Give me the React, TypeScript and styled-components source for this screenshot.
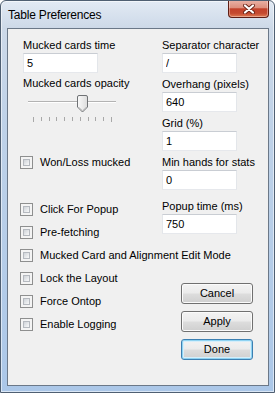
import React from "react";
import styled, { createGlobalStyle, css } from "styled-components";

const GlobalStyle = createGlobalStyle`
  html, body { margin: 0; padding: 0; background: #ffffff; }
  body {
    font-family: "Liberation Sans", Arial, sans-serif;
    font-size: 11px;
    color: #000;
  }
`;

const Window = styled.div`
  box-sizing: border-box;
  width: 275px;
  height: 393px;
  border: 1px solid #4f5f72;
  border-radius: 6px 6px 0 0;
  background: linear-gradient(
    to bottom,
    #e2eaf4 0px,
    #cdd9e8 27px,
    #bfd2e8 120px,
    #abc7e8 100%
  );
  box-shadow: inset 0 0 0 1px rgba(255, 255, 255, 0.55);
  padding: 0 5px 6px 6px;
  display: flex;
  flex-direction: column;
  overflow: hidden;
`;

const TitleBar = styled.div`
  height: 27px;
  flex: none;
  display: flex;
  justify-content: space-between;
  align-items: flex-start;
`;

const Title = styled.div`
  padding: 7px 0 0 1px;
  line-height: 14px;
  font-size: 12px;
  letter-spacing: -0.2px;
  color: #000;
`;

const CloseButton = styled.div`
  box-sizing: border-box;
  width: 41px;
  height: 18px;
  margin-top: -1px;
  border: 1px solid #5e1d14;
  border-top: none;
  border-radius: 0 0 4px 4px;
  background: linear-gradient(
    to bottom,
    #eab3a7 0%,
    #de8f7d 45%,
    #c3412a 52%,
    #c44a30 78%,
    #e07a52 100%
  );
  box-shadow: inset 0 0 0 1px rgba(255, 255, 255, 0.35);
  display: flex;
  align-items: center;
  justify-content: center;
`;

const Client = styled.div`
  flex: 1;
  border: 1px solid #6b7888;
  background: #f0f0f0;
  padding: 9px 0 0 12px;
  display: flex;
  flex-direction: column;
`;

const TopSection = styled.div`
  display: flex;
`;

const LeftCol = styled.div`
  width: 142px;
  display: flex;
  flex-direction: column;
`;

const RightCol = styled.div`
  display: flex;
  flex-direction: column;
  gap: 4px;
`;

const Field = styled.div<{ $indent?: boolean; $extra?: number }>`
  display: flex;
  flex-direction: column;
  gap: 1px;
  margin-left: ${(p) => (p.$indent ? 3 : 0)}px;
  margin-top: ${(p) => p.$extra ?? 0}px;
`;

const Label = styled.div<{ $indent?: boolean; $top?: number }>`
  line-height: 14px;
  height: 14px;
  white-space: nowrap;
  margin-left: ${(p) => (p.$indent ? 3 : 0)}px;
  margin-top: ${(p) => p.$top ?? 0}px;
`;

const TextBox = styled.input`
  box-sizing: border-box;
  width: 75px;
  height: 20px;
  margin: 0;
  padding: 0 3px;
  border: 1px solid;
  border-color: #c9cdd3 #e3e6ea #e6e8ec #e3e6ea;
  background: #fff;
  font-family: "Liberation Sans", Arial, sans-serif;
  font-size: 11px;
  color: #000;
  outline: none;
`;

const SliderBox = styled.div`
  margin-left: 3px;
  width: 100px;
  height: 34px;
`;

const CheckRow = styled.div<{ $top?: number }>`
  display: flex;
  align-items: center;
  gap: 7px;
  height: 13px;
  margin-top: ${(p) => p.$top ?? 0}px;
`;

const CheckBox = styled.span`
  box-sizing: border-box;
  width: 13px;
  height: 13px;
  flex: none;
  border: 1px solid #8e8f8f;
  background: #f4f4f4;
  padding: 2px;
  display: flex;
  &::after {
    content: "";
    flex: 1;
    border: 1px solid #b5b9bf;
    background: linear-gradient(135deg, #cfd3d8 0%, #eceef0 70%, #f8f8f8 100%);
  }
`;

const CheckText = styled.span`
  line-height: 13px;
  white-space: nowrap;
`;

const BottomSection = styled.div`
  display: flex;
  margin-top: 10px;
`;

const BottomLeft = styled.div`
  width: 161px;
  display: flex;
  flex-direction: column;
  gap: 10px;
`;

const ButtonCol = styled.div`
  margin-top: 11px;
  display: flex;
  flex-direction: column;
  gap: 7px;
`;

const Button = styled.button<{ $default?: boolean }>`
  box-sizing: border-box;
  width: 72px;
  height: 21px;
  margin: 0;
  padding: 0;
  border: 1px solid #707070;
  border-radius: 3px;
  background: linear-gradient(
    to bottom,
    #f3f3f3 0%,
    #ebebeb 48%,
    #dddddd 52%,
    #cfcfcf 100%
  );
  box-shadow: inset 0 0 0 1px #fbfbfb;
  font-family: "Liberation Sans", Arial, sans-serif;
  font-size: 11px;
  color: #000;
  line-height: 19px;
  ${(p) =>
    p.$default &&
    css`
      border-color: #3c7fb1;
      box-shadow: inset 0 0 0 1px #8fd3f2, inset 0 0 0 2px #d6eefa;
    `}
`;

const Slider: React.FC = () => {
  const ticks = Array.from({ length: 11 }, (_, i) => 10 + i * 7.8);
  return (
    <SliderBox>
      <svg width="100" height="34" viewBox="0 0 100 34">
        <defs>
          <linearGradient id="thumbGrad" x1="0" y1="0" x2="1" y2="0">
            <stop offset="0" stopColor="#fafafa" />
            <stop offset="1" stopColor="#dcdcdc" />
          </linearGradient>
        </defs>
        <line x1="5" y1="11.5" x2="93" y2="11.5" stroke="#b3b3b3" strokeWidth="1" />
        <line x1="5" y1="12.5" x2="93" y2="12.5" stroke="#ffffff" strokeWidth="1" />
        {ticks.map((x, i) => (
          <line
            key={i}
            x1={Math.round(x) + 0.5}
            y1="27"
            x2={Math.round(x) + 0.5}
            y2={i === 0 || i === 10 ? 32 : 31}
            stroke="#a8a8a8"
            strokeWidth="1"
          />
        ))}
        <path
          d="M54.5 7 Q54.5 5.5 56 5.5 H63 Q64.5 5.5 64.5 7 V17 L59.5 22 L54.5 17 Z"
          fill="url(#thumbGrad)"
          stroke="#6f7275"
          strokeWidth="1"
        />
        <path d="M56 17.5 L59.5 20.5 L63 17.5" fill="none" stroke="#c4c4c4" strokeWidth="1" />
      </svg>
    </SliderBox>
  );
};

const CloseGlyph: React.FC = () => (
  <svg width="12" height="10" viewBox="0 0 12 10">
    <path d="M2 1.5 L10 8.5 M10 1.5 L2 8.5" stroke="#6b2418" strokeWidth="4" strokeLinecap="round" />
    <path d="M2 1.5 L10 8.5 M10 1.5 L2 8.5" stroke="#ffffff" strokeWidth="2.2" strokeLinecap="round" />
  </svg>
);

const Check: React.FC<{ label: string; top?: number }> = ({ label, top }) => (
  <CheckRow $top={top}>
    <CheckBox />
    <CheckText>{label}</CheckText>
  </CheckRow>
);

const rightFields: { label: string; value: string; extra?: number }[] = [
  { label: "Separator character", value: "/" },
  { label: "Overhang (pixels)", value: "640" },
  { label: "Grid (%)", value: "1" },
  { label: "Min hands for stats", value: "0" },
  { label: "Popup time (ms)", value: "750", extra: 5 },
];

export default function App() {
  return (
    <>
      <GlobalStyle />
      <Window>
        <TitleBar>
          <Title>Table Preferences</Title>
          <CloseButton>
            <CloseGlyph />
          </CloseButton>
        </TitleBar>
        <Client>
          <TopSection>
            <LeftCol>
              <Field $indent>
                <Label>Mucked cards time</Label>
                <TextBox defaultValue="5" readOnly />
              </Field>
              <Label $indent $top={3}>
                Mucked cards opacity
              </Label>
              <Slider />
              <Check label="Won/Loss mucked" top={32} />
              <Check label="Click For Popup" top={34} />
              <Check label="Pre-fetching" top={10} />
            </LeftCol>
            <RightCol>
              {rightFields.map((f) => (
                <Field key={f.label} $extra={f.extra}>
                  <Label>{f.label}</Label>
                  <TextBox defaultValue={f.value} readOnly />
                </Field>
              ))}
            </RightCol>
          </TopSection>
          <Check label="Mucked Card and Alignment Edit Mode" top={10} />
          <BottomSection>
            <BottomLeft>
              <Check label="Lock the Layout" />
              <Check label="Force Ontop" />
              <Check label="Enable Logging" />
            </BottomLeft>
            <ButtonCol>
              <Button>Cancel</Button>
              <Button>Apply</Button>
              <Button $default>Done</Button>
            </ButtonCol>
          </BottomSection>
        </Client>
      </Window>
    </>
  );
}
